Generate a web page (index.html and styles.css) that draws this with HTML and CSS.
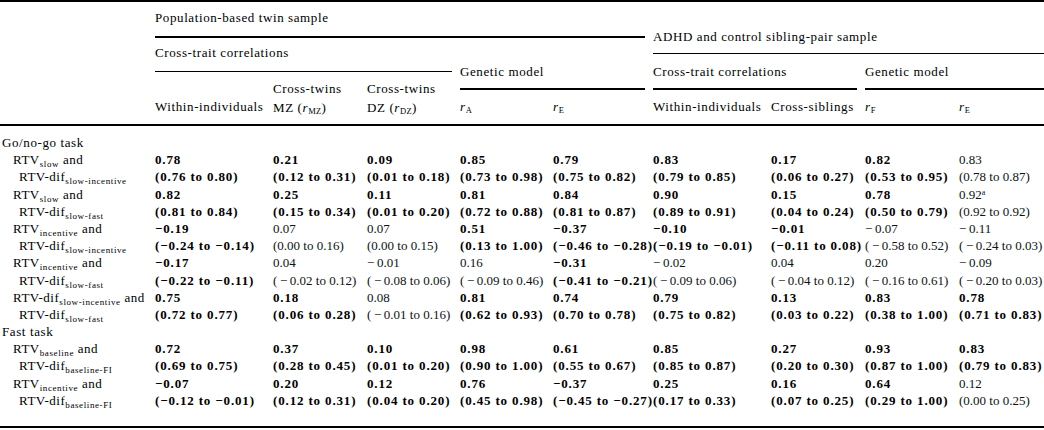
FILE: index.html
```html
<!DOCTYPE html>
<html lang="en">
<head>
<meta charset="utf-8">
<title>Cross-trait correlations</title>
<link rel="stylesheet" href="styles.css">
</head>
<body>
<div class="table">
  <div class="head">
    <div class="h pop">Population-based twin sample</div>
    <div class="h adhd">ADHD and control sibling-pair sample</div>
    <div class="h tct">Cross-trait correlations</div>
    <div class="h tgm">Genetic model</div>
    <div class="h act">Cross-trait correlations</div>
    <div class="h agm">Genetic model</div>
    <div class="h leaf c1">Within-individuals</div>
    <div class="h two c2"><span>Cross-twins</span><span>MZ (<i>r</i><span class="hs">MZ</span>)</span></div>
    <div class="h two c3"><span>Cross-twins</span><span>DZ (<i>r</i><span class="hs">DZ</span>)</span></div>
    <div class="h leaf c4"><span><i>r</i><span class="hs">A</span></span></div>
    <div class="h leaf c5"><span><i>r</i><span class="hs">E</span></span></div>
    <div class="h leaf c6">Within-individuals</div>
    <div class="h leaf c7">Cross-siblings</div>
    <div class="h leaf c8"><span><i>r</i><span class="hs">F</span></span></div>
    <div class="h leaf c9"><span><i>r</i><span class="hs">E</span></span></div>
  </div>
  <div class="body">
    <div class="cat">Go/no-go task</div>

    <div class="l1">RTV<span class="sub">slow</span> and</div>
    <div class="b">0.78</div><div class="b">0.21</div><div class="b">0.09</div><div class="b">0.85</div><div class="b">0.79</div><div class="b">0.83</div><div class="b">0.17</div><div class="b">0.82</div><div class="r">0.83</div>
    <div class="l2">RTV-dif<span class="sub">slow-incentive</span></div>
    <div class="b">(0.76 to 0.80)</div><div class="b">(0.12 to 0.31)</div><div class="b">(0.01 to 0.18)</div><div class="b">(0.73 to 0.98)</div><div class="b">(0.75 to 0.82)</div><div class="b">(0.79 to 0.85)</div><div class="b">(0.06 to 0.27)</div><div class="b">(0.53 to 0.95)</div><div class="r">(0.78 to 0.87)</div>

    <div class="l1">RTV<span class="sub">slow</span> and</div>
    <div class="b">0.82</div><div class="b">0.25</div><div class="b">0.11</div><div class="b">0.81</div><div class="b">0.84</div><div class="b">0.90</div><div class="b">0.15</div><div class="b">0.78</div><div class="r">0.92<span class="sup">a</span></div>
    <div class="l2">RTV-dif<span class="sub">slow-fast</span></div>
    <div class="b">(0.81 to 0.84)</div><div class="b">(0.15 to 0.34)</div><div class="b">(0.01 to 0.20)</div><div class="b">(0.72 to 0.88)</div><div class="b">(0.81 to 0.87)</div><div class="b">(0.89 to 0.91)</div><div class="b">(0.04 to 0.24)</div><div class="b">(0.50 to 0.79)</div><div class="r">(0.92 to 0.92)</div>

    <div class="l1">RTV<span class="sub">incentive</span> and</div>
    <div class="b">−0.19</div><div class="r">0.07</div><div class="r">0.07</div><div class="b">0.51</div><div class="b">−0.37</div><div class="b">−0.10</div><div class="b">−0.01</div><div class="r">−&thinsp;0.07</div><div class="r">−&thinsp;0.11</div>
    <div class="l2">RTV-dif<span class="sub">slow-incentive</span></div>
    <div class="b">(−0.24 to −0.14)</div><div class="r">(0.00 to 0.16)</div><div class="r">(0.00 to 0.15)</div><div class="b">(0.13 to 1.00)</div><div class="b">(−0.46 to −0.28)</div><div class="b">(−0.19 to −0.01)</div><div class="b">(−0.11 to 0.08)</div><div class="r">(&thinsp;−&thinsp;0.58 to 0.52)</div><div class="r">(&thinsp;−&thinsp;0.24 to 0.03)</div>

    <div class="l1">RTV<span class="sub">incentive</span> and</div>
    <div class="b">−0.17</div><div class="r">0.04</div><div class="r">−&thinsp;0.01</div><div class="r">0.16</div><div class="b">−0.31</div><div class="r">−&thinsp;0.02</div><div class="r">0.04</div><div class="r">0.20</div><div class="r">−&thinsp;0.09</div>
    <div class="l2">RTV-dif<span class="sub">slow-fast</span></div>
    <div class="b">(−0.22 to −0.11)</div><div class="r">(&thinsp;−&thinsp;0.02 to 0.12)</div><div class="r">(&thinsp;−&thinsp;0.08 to 0.06)</div><div class="r">(&thinsp;−&thinsp;0.09 to 0.46)</div><div class="b">(−0.41 to −0.21)</div><div class="r">(&thinsp;−&thinsp;0.09 to 0.06)</div><div class="r">(&thinsp;−&thinsp;0.04 to 0.12)</div><div class="r">(&thinsp;−&thinsp;0.16 to 0.61)</div><div class="r">(&thinsp;−&thinsp;0.20 to 0.03)</div>

    <div class="l1">RTV-dif<span class="sub">slow-incentive</span> and</div>
    <div class="b">0.75</div><div class="b">0.18</div><div class="r">0.08</div><div class="b">0.81</div><div class="b">0.74</div><div class="b">0.79</div><div class="b">0.13</div><div class="b">0.83</div><div class="b">0.78</div>
    <div class="l2">RTV-dif<span class="sub">slow-fast</span></div>
    <div class="b">(0.72 to 0.77)</div><div class="b">(0.06 to 0.28)</div><div class="r">(&thinsp;−&thinsp;0.01 to 0.16)</div><div class="b">(0.62 to 0.93)</div><div class="b">(0.70 to 0.78)</div><div class="b">(0.75 to 0.82)</div><div class="b">(0.03 to 0.22)</div><div class="b">(0.38 to 1.00)</div><div class="b">(0.71 to 0.83)</div>

    <div class="cat">Fast task</div>

    <div class="l1">RTV<span class="sub">baseline</span> and</div>
    <div class="b">0.72</div><div class="b">0.37</div><div class="b">0.10</div><div class="b">0.98</div><div class="b">0.61</div><div class="b">0.85</div><div class="b">0.27</div><div class="b">0.93</div><div class="b">0.83</div>
    <div class="l2">RTV-dif<span class="sub">baseline-FI</span></div>
    <div class="b">(0.69 to 0.75)</div><div class="b">(0.28 to 0.45)</div><div class="b">(0.01 to 0.20)</div><div class="b">(0.90 to 1.00)</div><div class="b">(0.55 to 0.67)</div><div class="b">(0.85 to 0.87)</div><div class="b">(0.20 to 0.30)</div><div class="b">(0.87 to 1.00)</div><div class="b">(0.79 to 0.83)</div>

    <div class="l1">RTV<span class="sub">incentive</span> and</div>
    <div class="b">−0.07</div><div class="b">0.20</div><div class="b">0.12</div><div class="b">0.76</div><div class="b">−0.37</div><div class="b">0.25</div><div class="b">0.16</div><div class="b">0.64</div><div class="r">0.12</div>
    <div class="l2">RTV-dif<span class="sub">baseline-FI</span></div>
    <div class="b">(−0.12 to −0.01)</div><div class="b">(0.12 to 0.31)</div><div class="b">(0.04 to 0.20)</div><div class="b">(0.45 to 0.98)</div><div class="b">(−0.45 to −0.27)</div><div class="b">(0.17 to 0.33)</div><div class="b">(0.07 to 0.25)</div><div class="b">(0.29 to 1.00)</div><div class="r">(0.00 to 0.25)</div>
  </div>
</div>
</body>
</html>
```
FILE: styles.css
```css
html, body {
  margin: 0;
  padding: 0;
  background: #ffffff;
}

body {
  color: #000000;
  font-family: "Liberation Serif", "Times New Roman", serif;
  font-size: 13px;
}

.table {
  width: 1044px;
}

.head,
.body {
  display: grid;
  grid-template-columns: 147px 110px 86px 85px 85px 92px 110px 86px 86px 85px;
  column-gap: 8px;
}

.head {
  grid-template-rows: 36px 16px 18px 18px 34px;
  border-top: 2px solid #000;
  border-bottom: 2px solid #000;
  line-height: 16px;
  letter-spacing: 0.6px;
}

.h {
  display: flex;
  flex-direction: column;
  justify-content: flex-end;
  white-space: nowrap;
}

.pop {
  grid-column: 2 / 7;
  grid-row: 1;
  padding-bottom: 10px;
  border-bottom: 2px solid #000;
}

.adhd {
  grid-column: 7 / 11;
  grid-row: 1 / 3;
  padding-bottom: 8px;
  border-bottom: 1px solid #000;
}

.tct {
  grid-column: 2 / 5;
  grid-row: 2 / 4;
  padding-bottom: 10px;
  border-bottom: 1px solid #000;
}

.tgm,
.act,
.agm {
  padding-bottom: 8px;
  border-bottom: 2px solid #000;
}

.tgm { grid-column: 5 / 7; grid-row: 2 / 5; }
.act { grid-column: 7 / 9; grid-row: 3 / 5; }
.agm { grid-column: 9 / 11; grid-row: 3 / 5; }

.leaf {
  grid-row: 5;
  padding-bottom: 9px;
}

.two {
  grid-row: 4 / 6;
  line-height: 19px;
  padding-bottom: 7px;
}

.c1 { grid-column: 2; }
.c2 { grid-column: 3; }
.c3 { grid-column: 4; }
.c4 { grid-column: 5; }
.c5 { grid-column: 6; }
.c6 { grid-column: 7; }
.c7 { grid-column: 8; }
.c8 { grid-column: 9; }
.c9 { grid-column: 10; }

.hs {
  font-size: 8.5px;
  letter-spacing: 0.3px;
  vertical-align: -2px;
  line-height: 0;
}

.body {
  grid-auto-rows: 17.2px;
  line-height: 17.2px;
  padding: 8px 0 16.8px;
  border-bottom: 2px solid #000;
  white-space: nowrap;
}

.cat {
  grid-column: 1 / -1;
  padding-left: 2px;
  letter-spacing: 0.6px;
}

.l1,
.l2 {
  letter-spacing: 0.5px;
}

.l1 { padding-left: 13px; }
.l2 { padding-left: 19px; }

.sub {
  font-size: 9px;
  letter-spacing: 0.6px;
  vertical-align: -2.5px;
  line-height: 0;
}

.b {
  font-weight: bold;
  letter-spacing: 0.85px;
}

.r {
  color: #111;
}

.sup {
  font-size: 8px;
  vertical-align: 4px;
  line-height: 0;
}
```
